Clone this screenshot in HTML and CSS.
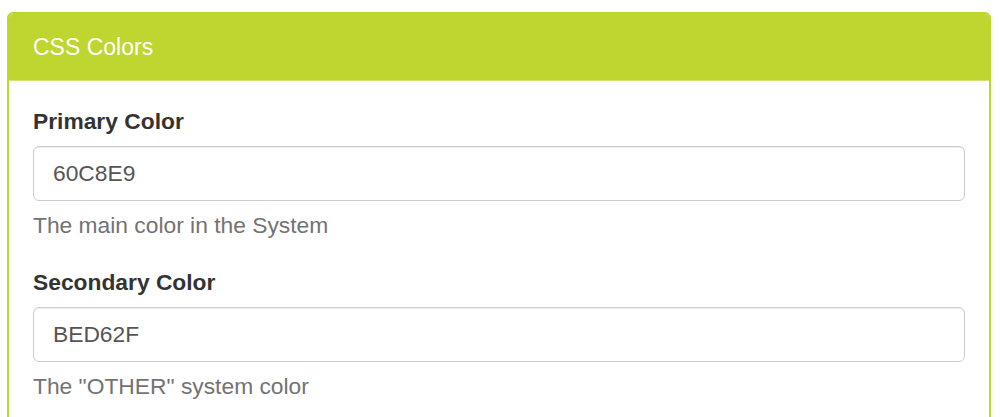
FILE: index.html
```html
<!DOCTYPE html>
<html lang="en">
<head>
    <meta charset="UTF-8">
    <meta name="viewport" content="width=device-width, initial-scale=1.0">
    <title>CSS Colors</title>
    <link rel="stylesheet" href="styles.css">
</head>
<body>
    <div class="panel">
        <div class="panel-heading">CSS Colors</div>
        <div class="panel-body">
            <div class="form-group">
                <label for="primaryColor">Primary Color</label>
                <input type="text" id="primaryColor" class="form-control" value="60C8E9">
                <p class="help-block">The main color in the System</p>
            </div>
            <div class="form-group">
                <label for="secondaryColor">Secondary Color</label>
                <input type="text" id="secondaryColor" class="form-control" value="BED62F">
                <p class="help-block">The "OTHER" system color</p>
            </div>
        </div>
    </div>
</body>
</html>
```

FILE: styles.css
```css
body {
    font-family: 'Liberation Sans', Arial, sans-serif;
    margin: 0;
    padding: 12px 9px 0 7px;
    background-color: #fff;
    color: #333;
}

.panel {
    border: 2px solid #bed62f;
    border-radius: 6px;
    background: #fff;
}

.panel-heading {
    background-color: #bed62f;
    color: #fff;
    font-size: 23px;
    line-height: 34px;
    padding: 16px 24px;
    border-bottom: 1px solid #d3e37a;
    border-radius: 4px 4px 0 0;
}

.panel-body {
    padding: 24px 24px 0;
}

.form-group {
    margin-bottom: 24px;
}

label {
    display: block;
    font-size: 22.8px;
    line-height: 32px;
    font-weight: bold;
    margin-bottom: 9px;
}

.form-control {
    display: block;
    width: 100%;
    box-sizing: border-box;
    height: 55px;
    padding: 0 19px;
    font-family: inherit;
    font-size: 22.8px;
    color: #555;
    background: #fff;
    border: 1px solid #ccc;
    border-radius: 6px;
    box-shadow: inset 0 1px 1px rgba(0, 0, 0, 0.075);
}

.help-block {
    margin: 8px 0 0;
    font-size: 22.8px;
    line-height: 33px;
    color: #737373;
}
```
